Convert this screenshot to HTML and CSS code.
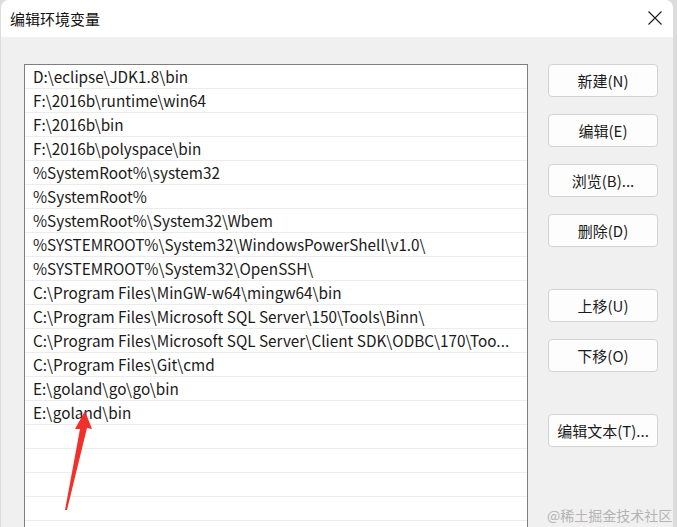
FILE: index.html
```html
<!DOCTYPE html>
<html lang="zh-CN">
<head>
<meta charset="utf-8">
<title>编辑环境变量</title>
<link rel="stylesheet" href="styles.css">
</head>
<body>
<div class="window">
  <div class="titlebar">
    <span class="title">编辑环境变量</span>
    <svg class="close" width="16" height="16" viewBox="0 0 16 16"><path d="M1.5 1.5 L14.5 14.5 M14.5 1.5 L1.5 14.5" stroke="#1b1b1b" stroke-width="1.1" fill="none"/></svg>
  </div>
  <div class="content">
    <div class="list">
      <div class="row">D:\eclipse\JDK1.8\bin</div>
      <div class="row">F:\2016b\runtime\win64</div>
      <div class="row">F:\2016b\bin</div>
      <div class="row">F:\2016b\polyspace\bin</div>
      <div class="row">%SystemRoot%\system32</div>
      <div class="row">%SystemRoot%</div>
      <div class="row">%SystemRoot%\System32\Wbem</div>
      <div class="row">%SYSTEMROOT%\System32\WindowsPowerShell\v1.0\</div>
      <div class="row">%SYSTEMROOT%\System32\OpenSSH\</div>
      <div class="row">C:\Program Files\MinGW-w64\mingw64\bin</div>
      <div class="row">C:\Program Files\Microsoft SQL Server\150\Tools\Binn\</div>
      <div class="row">C:\Program Files\Microsoft SQL Server\Client SDK\ODBC\170\Too...</div>
      <div class="row">C:\Program Files\Git\cmd</div>
      <div class="row">E:\goland\go\go\bin</div>
      <div class="row">E:\goland\bin</div>
      <div class="row"></div>
      <div class="row"></div>
      <div class="row"></div>
      <div class="row"></div>
    </div>
    <div class="buttons">
      <button class="btn">新建(N)</button>
      <button class="btn">编辑(E)</button>
      <button class="btn">浏览(B)...</button>
      <button class="btn">删除(D)</button>
      <button class="btn btn-group">上移(U)</button>
      <button class="btn">下移(O)</button>
      <button class="btn btn-group">编辑文本(T)...</button>
    </div>
  </div>
  <svg class="arrow" width="40" height="110" viewBox="0 0 40 110"><polygon points="25,1 32,19 27,18 7,100 5,100 20,19 15,19" fill="#f2302b"/></svg>
  <div class="watermark">@稀土掘金技术社区</div>
</div>
</body>
</html>
```

FILE: styles.css
```css
html, body {
  margin: 0;
  padding: 0;
  height: 100%;
  overflow: hidden;
  background: #dcdcdc;
  font-family: "Noto Sans CJK SC", "Noto Sans", sans-serif;
  color: #1a1a1a;
}

.window {
  position: relative;
  margin-left: 1px;
  width: 672px;
  height: 540px;
  background: #f0f0f0;
  border-radius: 8px 8px 0 0;
  overflow: hidden;
}

.titlebar {
  height: 37px;
  background: #ffffff;
  display: flex;
  align-items: center;
  justify-content: space-between;
  padding: 0 9px 0 9px;
}

.title {
  font-size: 15px;
  color: #111;
  margin-top: -1px;
}

.close {
  margin-right: 1px;
  margin-top: -1px;
}

.content {
  display: flex;
  align-items: flex-start;
  padding: 27px 0 0 23px;
  gap: 20px;
}

.list {
  width: 504px;
  height: 480px;
  background: #ffffff;
  border: 1px solid #7f7f7f;
  box-sizing: border-box;
  overflow: hidden;
}

.row {
  height: 24px;
  line-height: 23px;
  border-bottom: 1px solid #ececec;
  padding: 0 6px 0 8px;
  font-size: 15.3px;
  white-space: nowrap;
  overflow: hidden;
  text-overflow: ellipsis;
  box-sizing: border-box;
}

.buttons {
  display: flex;
  flex-direction: column;
  gap: 17px;
}

.btn {
  width: 110px;
  height: 33px;
  background: #fdfdfd;
  border: 1px solid #d3d3d3;
  border-radius: 4px;
  font-family: "Noto Sans CJK SC", "Noto Sans", sans-serif;
  font-size: 15px;
  color: #1a1a1a;
  padding: 0;
}

.btn-group {
  margin-top: 25px;
}

.arrow {
  position: absolute;
  left: 59px;
  top: 410px;
}

.watermark {
  position: absolute;
  left: 546px;
  top: 505px;
  font-size: 14px;
  color: #b4b4b4;
  white-space: nowrap;
}
```
